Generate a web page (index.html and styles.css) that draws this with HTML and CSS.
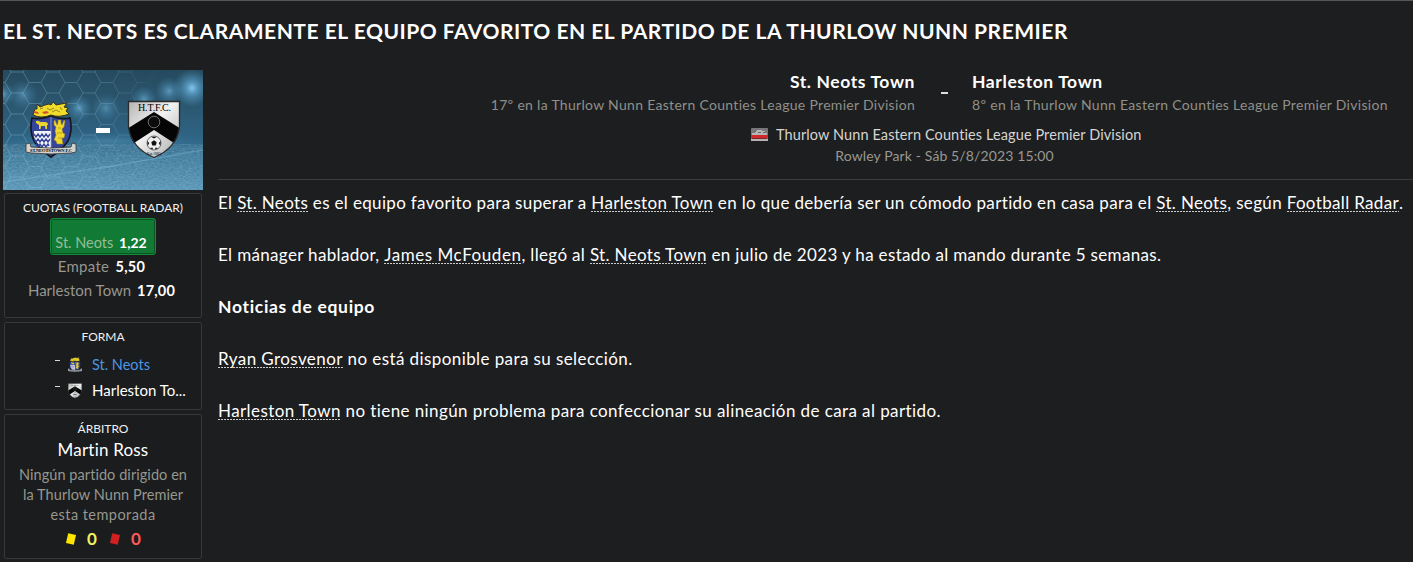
FILE: index.html
```html
<!DOCTYPE html>
<html lang="es">
<head>
    <meta charset="UTF-8">
    <meta name="viewport" content="width=device-width, initial-scale=1.0">
    <title>St. Neots Town - Harleston Town</title>
    <link rel="stylesheet" href="styles.css">
</head>
<body>
    <h1 class="headline">EL ST. NEOTS ES CLARAMENTE EL EQUIPO FAVORITO EN EL PARTIDO DE LA THURLOW NUNN PREMIER</h1>

    <div class="page">
        <aside class="sidebar">
            <svg class="banner" width="200" height="120" viewBox="0 0 200 120">
                <defs>
                    <linearGradient id="sky" x1="0" y1="0" x2="0" y2="1">
                        <stop offset="0" stop-color="#264a5e"/>
                        <stop offset=".3" stop-color="#2b5770"/>
                        <stop offset=".58" stop-color="#2f6585"/>
                        <stop offset=".72" stop-color="#3c7898"/>
                        <stop offset="1" stop-color="#5592b4"/>
                    </linearGradient>
                    <radialGradient id="glow">
                        <stop offset="0" stop-color="#86ccf5" stop-opacity=".95"/>
                        <stop offset=".4" stop-color="#5fa9d4" stop-opacity=".6"/>
                        <stop offset="1" stop-color="#4a92bd" stop-opacity="0"/>
                    </radialGradient>
                    <linearGradient id="silver" x1="0" y1="0" x2="1" y2="1">
                        <stop offset="0" stop-color="#b4b4b4"/>
                        <stop offset=".45" stop-color="#f2f2f2"/>
                        <stop offset="1" stop-color="#aaaaaa"/>
                    </linearGradient>
                    <pattern id="hex" width="36" height="21" patternUnits="userSpaceOnUse" patternTransform="translate(-4 2)">
                        <path d="M0 10.5 H6 L12 0 H24 L30 10.5 H36 M6 10.5 L12 21 H24 L30 10.5" fill="none" stroke="#8dbfd6" stroke-width=".9"/>
                    </pattern>
                    <linearGradient id="fade" x1="0" x2="1" y1="0" y2="0">
                        <stop offset="0" stop-color="#fff" stop-opacity=".42"/>
                        <stop offset=".5" stop-color="#fff" stop-opacity=".3"/>
                        <stop offset=".8" stop-color="#fff" stop-opacity="0"/>
                    </linearGradient>
                    <mask id="hexmask"><rect width="200" height="120" fill="url(#fade)"/></mask>
                    <filter id="turf"><feTurbulence type="fractalNoise" baseFrequency=".35 .7" numOctaves="2"/><feColorMatrix values="0 0 0 0 .65  0 0 0 0 .85  0 0 0 0 1  .9 0 0 0 -.2"/></filter>

                    <symbol id="neots" viewBox="0 0 52 58">
                        <path d="M7 17 Q4 30 9 40 Q15 49 26 56 Q37 49 43 40 Q48 30 45 17 Q37 19 26 15 Q15 19 7 17Z" fill="#34459a" stroke="#15151c" stroke-width="1.6"/>
                        <path d="M9 30 H26 V53 Q14 47 9 36Z" fill="#f2f4fa"/>
                        <path d="M9 33 l2 3 2-3 2 3 2-3 2 3 2-3 2 3 2-3 M9 38 l2 3 2-3 2 3 2-3 2 3 2-3 2 3 2-3 M11 43 l2 3 2-3 2 3 2-3 2 3 2-3 1 2" fill="none" stroke="#34459a" stroke-width="1.4"/>
                        <path d="M26 16 V53" stroke="#9aa6d8" stroke-width=".8"/>
                        <path d="M11 20 q3-1 4 1 h5 q3 0 3 3 l-1 0 v4 h-1.5 l-.5-3 h-4 l-.5 3 h-1.5 v-4 l-3-2z" fill="#ecd42f"/>
                        <path d="M29 20 l1-1 2 5 1-2 v-3 h3 v3 l1 2 2-5 1 1 -1 6 -2 2 1 4 2 1 -1 4 -2 0 1 6 h-6 l-1-3 -2-1 2-5 -1-4 1-4 -2-2z" fill="#efd72e" stroke="#8e7d22" stroke-width=".5"/>
                        <path d="M33 27h3M32 32h5M33 37h4" stroke="#8e7d22" stroke-width=".6"/>
                        <path d="M8 14 L10 8 L12 8 L12 3 L15 6 L20 4 L24 3 L26 4 L28 1 L31 4 L36 3 L42 2 L39 6 L43 7 L41 10 L44 13 Q34 17 26 14 Q16 18 8 14Z" fill="#f1dc2c" stroke="#37341a" stroke-width="1"/>
                        <path d="M9 10 l4 1 1 2 -5-1z M17 11 l5-1 2 2 -5 1z" fill="#cf532d"/>
                        <path d="M15 8 l3-1 M22 7 l3 2 4-2 M27 11 l4-2 4 2 M35 6 l2 3" stroke="#7d711d" fill="none" stroke-width=".8"/>
                        <path d="M1 43 L5 42 L6 46 Q26 48 46 46 L47 42 L51 43 V51 L46 52 Q26 54 6 52 L1 51Z" fill="#d3d2ce" stroke="#333" stroke-width=".8"/>
                        <text class="ribbon" x="26" y="51.2" text-anchor="middle" textLength="42">ST.NEOTSTOWN F.C</text>
                    </symbol>

                    <symbol id="htfc" viewBox="0 0 54 60">
                        <path d="M1.5 1.5 H52.5 V26 Q50 48 27 57.5 Q4 48 1.5 26Z" fill="url(#silver)"/>
                        <path d="M27 12 L52.5 28 Q51.5 37 47 43 L27 30 L7 43 Q2.5 37 1.5 28Z" fill="#050505"/>
                        <path d="M1.5 1.5 H52.5 V26 Q50 48 27 57.5 Q4 48 1.5 26Z" fill="none" stroke="#2b2b2b" stroke-width="1.3"/>
                        <circle cx="27" cy="22" r="5.8" fill="#0c0c0c" stroke="#858585" stroke-width=".8"/>
                        <circle cx="27" cy="43" r="7" fill="#eee" stroke="#222" stroke-width=".6"/>
                        <path d="M27 40.3 l2.7 2 -1 3.1 h-3.4 l-1-3.1z M24 36.8 h6 l-3 1.6z M20.2 41 l2 2 -1.5 3z M33.8 41 l-2 2 1.5 3z M22.6 48.2 l2.7-.6 1 2z M31.4 48.2 l-2.7-.6 -1 2z" fill="#111"/>
                        <text class="initials" x="27.5" y="10.6" text-anchor="middle" textLength="33">H.T.F.C.</text>
                        <text class="founded" x="27" y="55.3" text-anchor="middle">Est.1885</text>
                    </symbol>
                </defs>
                <rect width="200" height="120" fill="url(#sky)"/>
                <rect y="79" width="200" height="41" filter="url(#turf)" opacity=".4"/>
                <path d="M0 112 L110 96 L200 80" stroke="#86bfdc" stroke-width="1.4" fill="none" opacity=".35"/>
                <circle cx="189" cy="18" r="19" fill="url(#glow)"/>
                <circle cx="166" cy="21" r="14" fill="url(#glow)" opacity=".6"/>
                <circle cx="141" cy="29" r="13" fill="url(#glow)" opacity=".55"/>
                <circle cx="76" cy="38" r="13" fill="url(#glow)" opacity=".6"/>
                <circle cx="103" cy="38" r="14" fill="url(#glow)" opacity=".45"/>
                <circle cx="20" cy="25" r="15" fill="url(#glow)" opacity=".45"/>
                <circle cx="0" cy="24" r="12" fill="url(#glow)" opacity=".6"/>
                <ellipse cx="100" cy="71" rx="110" ry="9" fill="url(#glow)" opacity=".25"/>
                <rect width="200" height="120" fill="url(#hex)" mask="url(#hexmask)"/>
                <use href="#neots" x="22" y="31" width="52" height="58"/>
                <rect x="93" y="58" width="14" height="5" fill="#fff"/>
                <use href="#htfc" x="124" y="30" width="54" height="60"/>
            </svg>

            <section class="box odds">
                <h3>CUOTAS (FOOTBALL RADAR)</h3>
                <div class="odd favourite"><span>St. Neots</span> <b>1,22</b></div>
                <div class="odd draw"><span>Empate</span> <b>5,50</b></div>
                <div class="odd away"><span>Harleston Town</span> <b>17,00</b></div>
            </section>

            <section class="box form">
                <h3>FORMA</h3>
                <div class="form-row">
                    <i class="dash"></i>
                    <svg class="crest" width="16" height="16"><use href="#neots"/></svg>
                    <a class="club home">St. Neots</a>
                </div>
                <div class="form-row">
                    <i class="dash"></i>
                    <svg class="crest" width="16" height="16"><use href="#htfc"/></svg>
                    <a class="club">Harleston To...</a>
                </div>
            </section>

            <section class="box referee">
                <h3>ÁRBITRO</h3>
                <div class="ref-name">Martin Ross</div>
                <p class="ref-note">Ningún partido dirigido en<br>la Thurlow Nunn Premier<br><span>esta temporada</span></p>
                <div class="cards">
                    <i class="card yellow"></i><b class="count-yellow">0</b>
                    <i class="card red"></i><b class="count-red">0</b>
                </div>
            </section>
        </aside>

        <main class="content">
            <header class="match">
                <div class="teams">
                    <div class="team team-home">
                        <div class="team-name">St. Neots Town</div>
                        <div class="team-pos">17º en la Thurlow Nunn Eastern Counties League Premier Division</div>
                    </div>
                    <i class="versus"></i>
                    <div class="team">
                        <div class="team-name">Harleston Town</div>
                        <div class="team-pos">8º en la Thurlow Nunn Eastern Counties League Premier Division</div>
                    </div>
                </div>
                <div class="competition">
                    <svg width="17" height="13" viewBox="0 0 17 13">
                        <rect width="17" height="13" rx="1" fill="#77777a"/>
                        <path d="M1 5h3V3h2V2h5v1h3v2h2v2H1z" fill="#b5b5b7"/>
                        <path d="M3 3h2v1H3zM7 4h3v1H7zM12 4h2v1h-2z" fill="#666"/>
                        <rect y="7" width="17" height="3" fill="#cf2930"/>
                        <path d="M1 10.5h15" stroke="#7d2529"/>
                        <rect y="11" width="17" height="2" fill="#b4b2b2"/>
                    </svg>
                    <span>Thurlow Nunn Eastern Counties League Premier Division</span>
                </div>
                <div class="venue">Rowley Park - Sáb 5/8/2023 15:00</div>
            </header>

            <article class="story">
                <p>El <a>St. Neots</a> es el equipo favorito para superar a <a>Harleston Town</a> en lo que debería ser un cómodo partido en casa para el <a>St. Neots</a>, según <a>Football Radar</a>.</p>
                <p>El mánager hablador, <a class="manager">James McFouden</a>, llegó al <a>St. Neots Town</a> en julio de 2023 y ha estado al mando durante 5 semanas.</p>
                <h2>Noticias de equipo</h2>
                <p class="news"><a>Ryan Grosvenor</a> no está disponible para su selección.</p>
                <p class="news"><a>Harleston Town</a> no tiene ningún problema para confeccionar su alineación de cara al partido.</p>
            </article>
        </main>
    </div>
</body>
</html>
```
FILE: styles.css
```css
* {
    box-sizing: border-box;
}
body {
    margin: 0;
    height: 562px;
    overflow: hidden;
    border-top: 1px solid #555758;
    background: #1d1e20;
    color: #fff;
    font-family: Lato, sans-serif;
    font-size: 17px;
}
h1, h2, h3, p {
    margin: 0;
}
.headline {
    padding: 16px 3px 0;
    height: 69px;
    font-size: 21px;
    line-height: 28px;
    font-weight: 700;
    letter-spacing: 0.51px;
    white-space: nowrap;
}
.page {
    display: flex;
}
.sidebar {
    width: 203px;
    padding-left: 3px;
    flex: none;
}
.banner {
    display: block;
    margin-bottom: 3px;
}
.box {
    width: 198px;
    margin: 0 0 4px 1px;
    padding-top: 6px;
    border: 1px solid #37383a;
    border-radius: 2px;
    background: #1b1c1d;
    text-align: center;
    font-size: 15px;
}
.box h3 {
    font-size: 12px;
    font-weight: 400;
    line-height: 16px;
    color: #f0f0f0;
}
.odds {
    height: 125px;
}
.odd {
    height: 24px;
    padding-right: 3px;
    line-height: 23px;
    white-space: nowrap;
    color: #96978f;
}
.odd b {
    margin-left: 2px;
    color: #fff;
    font-size: 14.5px;
}
.odds .favourite {
    width: 106px;
    height: 37px;
    margin: 2px auto 0 45px;
    padding: 12px 4px 0 0;
    border: 1px solid #128a39;
    border-radius: 3px;
    box-shadow: inset 0 0 0 1px #0b5424;
    background: #117a34;
    color: #95bd98;
    font-size: 14.5px;
}
.favourite b {
    font-size: 14px;
}
.draw {
    letter-spacing: 0.3px;
}
.away b {
    letter-spacing: 0.2px;
}
.form {
    height: 88px;
}
.form-row {
    display: flex;
    height: 26px;
    padding-left: 50px;
    line-height: 25px;
}
.box.form h3 {
    margin-bottom: 7px;
}
.dash {
    width: 5px;
    height: 1px;
    margin: 8px 7px 0 0;
    background: #d8d8d8;
}
.crest {
    margin: 5px 9px 0 0;
}
.club {
    white-space: nowrap;
    color: #fff;
}
.home {
    color: #4b97e4;
    font-size: 14.5px;
}
.referee {
    height: 145px;
}
.ref-name {
    margin-top: 2px;
    font-size: 17px;
    line-height: 22px;
    letter-spacing: 0.2px;
}
.ref-note {
    margin-top: 4px;
    font-size: 14.5px;
    line-height: 20px;
    letter-spacing: 0.06px;
    white-space: nowrap;
    color: #96978f;
}
.ref-note span {
    letter-spacing: 0.45px;
}
.cards {
    display: flex;
    align-items: center;
    height: 28px;
    padding-left: 62px;
    font-size: 17px;
    line-height: 18px;
}
.card {
    width: 8px;
    height: 10px;
    transform: rotate(13deg);
}
.yellow {
    background: #ffe600;
}
.red {
    background: #d0201f;
}
.count-yellow {
    margin: 0 14px 0 12px;
    color: #f0f060;
}
.count-red {
    margin-left: 12px;
    color: #ff5a5a;
}
.content {
    flex: 1;
    margin-left: 15px;
}
.match {
    height: 110px;
    padding-left: 258px;
    border-bottom: 1px solid #3b3c3e;
}
.teams {
    display: grid;
    grid-template-columns: 439px 57px 1fr;
    height: 54px;
}
.team {
    white-space: nowrap;
}
.team-home {
    text-align: right;
}
.team-name {
    font-size: 17.5px;
    font-weight: 700;
    line-height: 24px;
    letter-spacing: 0.6px;
}
.team-pos {
    font-size: 14px;
    line-height: 22px;
    letter-spacing: 0.3px;
    color: #8f9089;
}
.versus {
    width: 7px;
    height: 2px;
    margin: 22px 0 0 26px;
    background: #ddd;
}
.competition {
    display: flex;
    align-items: center;
    gap: 8px;
    height: 21px;
    padding-left: 275px;
    font-size: 14.5px;
    letter-spacing: 0.1px;
    white-space: nowrap;
    color: #d5d5d3;
}
.venue {
    padding-top: 1px;
    text-align: center;
    font-size: 14px;
    line-height: 20px;
    letter-spacing: 0.12px;
    color: #989991;
}
.story {
    padding-top: 10px;
    line-height: 26px;
    letter-spacing: 0.34px;
    white-space: nowrap;
}
.story p, .story h2 {
    height: 26px;
    margin-bottom: 26px;
}
.story h2 {
    font-size: 17.5px;
    line-height: 26px;
    letter-spacing: 0.68px;
}
.story .news {
    letter-spacing: 0.41px;
}
/* short dashes just under the baseline */
.story a {
    display: inline-block;
    height: 18px;
    line-height: 18px;
    background: repeating-linear-gradient(90deg, #ccc 0 2px, transparent 2px 3px) 0 100% / 100% 1px no-repeat;
}
.story .manager {
    letter-spacing: 0.55px;
}
.ribbon {
    font: bold 4.5px "Liberation Serif", serif;
}
.initials {
    font: 10px "Liberation Serif", serif;
}
.founded {
    font: 4px "Liberation Serif", serif;
}
```
